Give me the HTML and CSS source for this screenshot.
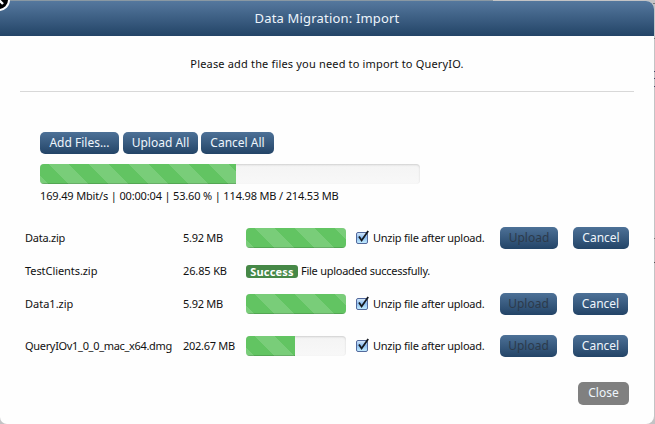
FILE: index.html
```html
<!DOCTYPE html>
<html lang="en">
<head>
<meta charset="utf-8">
<title>Data Migration: Import</title>
<link rel="stylesheet" href="styles.css">
</head>
<body>
<div class="backdrop-marks"></div>
<main class="dialog">
  <header class="titlebar"><h1>Data Migration: Import</h1></header>
  <p class="intro"><span>Please add the files you need to import to QueryIO.</span></p>
  <section class="overall">
    <div class="actions">
      <button class="btn add">Add Files...</button>
      <button class="btn all">Upload All</button>
      <button class="btn cancel-all">Cancel All</button>
    </div>
    <div class="progress total"><div class="bar" style="width:196px"></div></div>
    <div class="stats">169.49 Mbit/s | 00:00:04 | 53.60 % | 114.98 MB / 214.53 MB</div>
  </section>
  <section class="files">
    <div class="row first">
      <span class="name n1">Data.zip</span><span class="size s1">5.92 MB</span>
      <div class="progress"><div class="bar" style="width:100px"></div></div>
      <label class="unzip"><svg class="check" viewBox="0 0 14 15"><use href="#check"/></svg><span>Unzip file after upload.</span></label>
      <button class="btn upload" disabled>Upload</button><button class="btn cancel">Cancel</button>
    </div>
    <div class="row done">
      <span class="name n2">TestClients.zip</span><span class="size s2">26.85 KB</span>
      <span class="badge">Success</span><span class="message">File uploaded successfully.</span>
    </div>
    <div class="row">
      <span class="name n3">Data1.zip</span><span class="size s1">5.92 MB</span>
      <div class="progress"><div class="bar" style="width:100px"></div></div>
      <label class="unzip"><svg class="check" viewBox="0 0 14 15"><use href="#check"/></svg><span>Unzip file after upload.</span></label>
      <button class="btn upload" disabled>Upload</button><button class="btn cancel">Cancel</button>
    </div>
    <div class="row last">
      <span class="name n4">QueryIOv1_0_0_mac_x64.dmg</span><span class="size s4">202.67 MB</span>
      <div class="progress"><div class="bar" style="width:49px"></div></div>
      <label class="unzip"><svg class="check" viewBox="0 0 14 15"><use href="#check"/></svg><span>Unzip file after upload.</span></label>
      <button class="btn upload" disabled>Upload</button><button class="btn cancel">Cancel</button>
    </div>
  </section>
  <footer><button class="btn close">Close</button></footer>
</main>
<svg class="dismiss" viewBox="0 0 12 12"><circle cx="-1" cy="0" r="10" fill="#000" stroke="#fff" stroke-width="2"/><path d="M-2 -1L3 4" stroke="#fff" stroke-width="2.4"/></svg>
<svg class="defs" width="0" height="0">
  <defs>
    <linearGradient id="blue" x1="0" y1="0" x2="0" y2="1"><stop offset="0" stop-color="#dcecfb"/><stop offset=".45" stop-color="#8dbdf0"/><stop offset="1" stop-color="#c5efff"/></linearGradient>
    <symbol id="check" viewBox="0 0 14 15"><rect x=".5" y="2.5" width="11" height="11" rx="1.5" fill="url(#blue)" stroke="#53699c"/><path d="M3 6.5L5.6 10.4L12.2 1" fill="none" stroke="#15191f" stroke-width="1.8"/></symbol>
  </defs>
</svg>
</body>
</html>
```
FILE: styles.css
```css
* { box-sizing: border-box; }
body { margin: 0; width: 655px; height: 424px; overflow: hidden; position: relative; background: #c3c3c5; color: #111; font: 11px/16px "Noto Sans", "Open Sans", sans-serif; padding-top: 1px; }
body::before { content: ""; position: absolute; left: 0; top: 0; width: 493px; height: 1px; background: #8998a3; }
.backdrop-marks { position: absolute; right: 0; top: 0; width: 2px; height: 424px; background: linear-gradient(#777, #777) 0 3px / 2px 1px no-repeat, linear-gradient(#777, #777) 0 38px / 2px 1px no-repeat, linear-gradient(#446, #446) 0 71px / 2px 1px no-repeat, linear-gradient(#446, #446) 0 78px / 2px 1px no-repeat, linear-gradient(#446, #446) 0 86px / 2px 1px no-repeat, linear-gradient(#777, #777) 0 238px / 2px 1px no-repeat, linear-gradient(#555, #555) 0 262px / 2px 1px no-repeat; }
.dialog { position: relative; width: 654px; height: 423px; background: #fefefe; border-radius: 0 8px 8px 7px; overflow: hidden; }
.titlebar { height: 35px; background: linear-gradient(#55789e, #234467); display: flex; justify-content: center; }
h1 { margin: 0; color: #edf4fb; font-size: 13px; line-height: 35px; font-weight: 400; white-space: nowrap; letter-spacing: .18px; }
.intro { margin: 0 20px; height: 56px; border-bottom: 1px solid #d8d8d8; text-align: center; line-height: 56px; white-space: nowrap; letter-spacing: .17px; }
.overall { margin: 40px 0 0 40px; }
.actions { display: flex; gap: 4px; }
.btn { border: 0; border-radius: 5px; padding: 0; height: 22px; color: #eef5fc; background: linear-gradient(#4d7197, #234467); font: 12px/21px "Noto Sans", sans-serif; text-align: center; white-space: nowrap; display: flex; justify-content: center; align-items: flex-start; }
.add { width: 79px; } .all { width: 75px; } .cancel-all { width: 73px; margin-left: -1px; }
.progress { height: 20px; width: 100px; border-radius: 4px; overflow: hidden; background: linear-gradient(#f4f4f4, #f8f8f8); box-shadow: inset 0 1px 2px rgba(0,0,0,.15); }
.total { width: 380px; margin-top: 10px; }
.bar { height: 100%; background: #62c462 linear-gradient(45deg, rgba(255,255,255,.15) 25%, transparent 25%, transparent 50%, rgba(255,255,255,.15) 50%, rgba(255,255,255,.15) 75%, transparent 75%) 9px 0 / 40px 40px; box-shadow: inset 0 -1px 0 rgba(0,0,0,.15); }
.stats { margin-top: 4px; white-space: nowrap; letter-spacing: -.16px; }
.files { margin: 22px 0 0 25px; }
.row { display: flex; align-items: center; height: 24px; margin-bottom: 42px; white-space: nowrap; }
.first { margin-bottom: 9px; } .done { margin-bottom: 9px; } .row:nth-child(3) { margin-bottom: 18px; } .row.last { margin: 0; }
.name { width: 158px; flex: none; } .size { width: 63px; flex: none; letter-spacing: -.28px; }
.n1 { letter-spacing: -.25px; } .n2 { letter-spacing: -.07px; } .n4 { letter-spacing: -.32px; } .s2 { letter-spacing: -.13px; }
.unzip { display: flex; align-items: center; width: 144px; margin-left: 10px; letter-spacing: -.25px; }
.message { letter-spacing: -.26px; }
.check { width: 14px; height: 15px; margin-right: 3px; flex: none; position: relative; top: -1px; }
.upload { width: 58px; color: #2c3a4b; } .cancel { width: 56px; margin-left: 15px; }
.row:not(.first) .upload { width: 57px; } .row:not(.first) .cancel { width: 55px; margin-left: 16px; }
.badge { height: 13px; width: 52px; border-radius: 3px; background: #468847; color: #fff; font-weight: 700; line-height: 13px; text-align: center; margin-right: 3px; letter-spacing: .2px; }
footer { margin: 24px 0 0 578px; }
.close { width: 51px; height: 23px; background: #808080; line-height: 21px; }
.dismiss { position: absolute; left: 0; top: 0; width: 12px; height: 12px; }
.defs { position: absolute; }
```
